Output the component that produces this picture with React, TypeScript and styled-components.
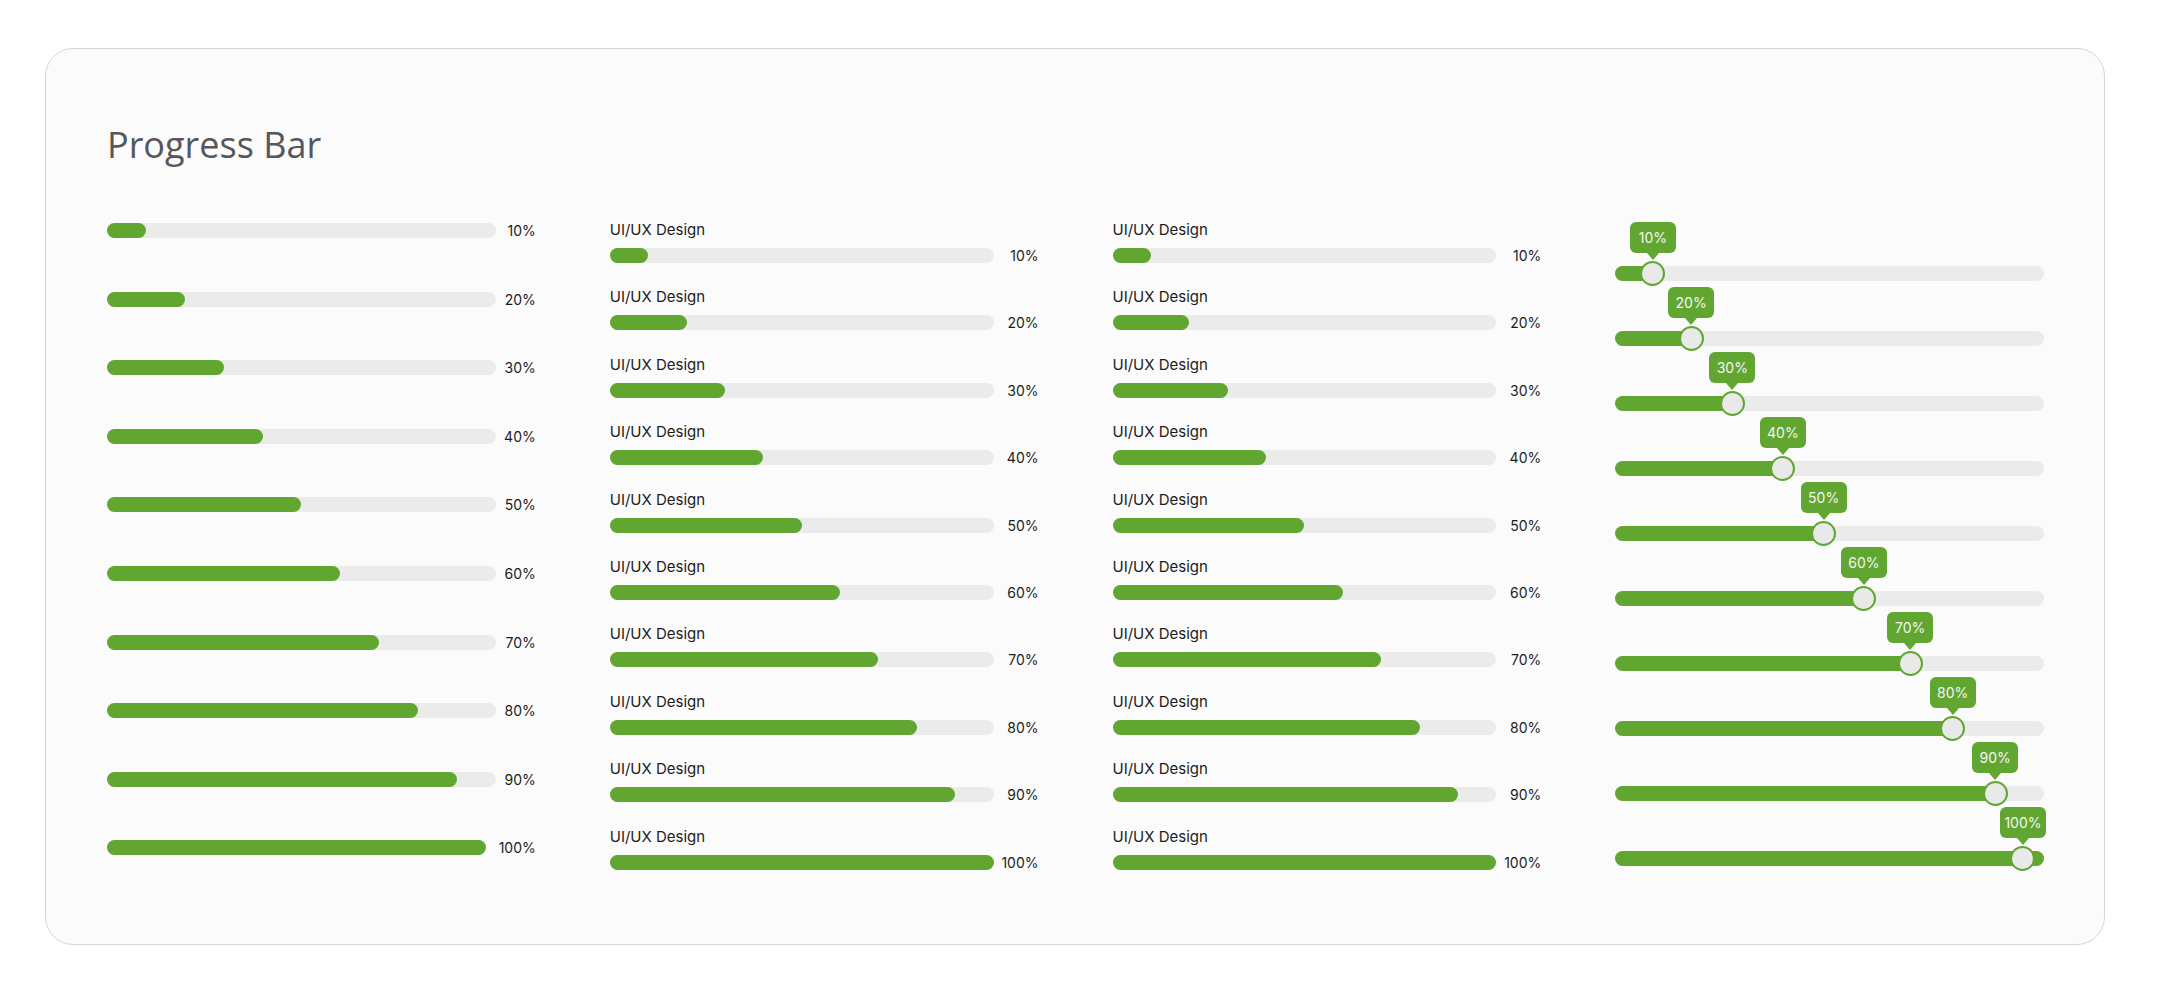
import styled, { createGlobalStyle } from "styled-components"

const GREEN = "#62a632"
const TRACK = "#ebebeb"

const steps = [10, 20, 30, 40, 50, 60, 70, 80, 90, 100]
// where the handle sits along the slider track (hand-placed in the design)
const handleAt = [8.8, 17.7, 27.3, 39.1, 48.6, 58.0, 68.8, 78.7, 88.6, 95.1]

const GlobalStyle = createGlobalStyle`
  body {
    margin: 0;
    background: #ffffff;
    font-family: Inter, "Noto Sans", sans-serif;
  }
`

const App = () => {
  return (
    <>
      <GlobalStyle />
      <Card>
        <Title>Progress Bar</Title>
        <Columns>
          <Column $gap={53.6} $offset={3}>
            {steps.map((pct) => (
              <BarRow key={pct}>
                <Track>
                  <Fill style={{ width: `${pct}%` }} />
                </Track>
                <Value $width={pct === 100 ? 50 : 40}>{pct}%</Value>
              </BarRow>
            ))}
          </Column>

          {[0, 1].map((col) => (
            <Column key={col} $gap={24.4} $offset={0}>
              {steps.map((pct) => (
                <Item key={pct}>
                  <ItemLabel>UI/UX Design</ItemLabel>
                  <BarRow>
                    <Track>
                      <Fill style={{ width: `${pct}%` }} />
                    </Track>
                    <Value $width={45}>{pct}%</Value>
                  </BarRow>
                </Item>
              ))}
            </Column>
          ))}

          <Column $gap={6} $offset={2}>
            {steps.map((pct, i) => (
              <SliderRow key={pct}>
                <Track>
                  <Fill style={{ width: `${pct}%` }} />
                  <Handle style={{ left: `${handleAt[i]}%` }}>
                    <Tooltip>{pct}%</Tooltip>
                    <Thumb />
                  </Handle>
                </Track>
              </SliderRow>
            ))}
          </Column>
        </Columns>
      </Card>
    </>
  )
}

const Card = styled.section`
  box-sizing: border-box;
  height: 897px;
  margin: 48px 55px 0 45px;
  padding: 78px 60px 0 61px;
  background: #fbfbfb;
  border: 1px solid #d6d6d6;
  border-radius: 28px;
`
const Title = styled.h1`
  margin: 0 0 57px;
  font-family: "Open Sans", sans-serif;
  font-size: 36px;
  line-height: 36px;
  font-weight: 400;
  color: #56575c;
`
const Columns = styled.div`
  display: grid;
  grid-template-columns: repeat(4, 1fr);
  column-gap: 74px;
  align-items: start;
`
const Column = styled.div<{ $gap: number; $offset: number }>`
  display: flex;
  flex-direction: column;
  gap: ${(p) => p.$gap}px;
  padding-top: ${(p) => p.$offset}px;
`
const BarRow = styled.div`
  display: flex;
  align-items: center;
  height: 15px;
`
const Track = styled.div`
  position: relative;
  flex: 1;
  height: 15px;
  background: ${TRACK};
  border-radius: 8px;
`
const Fill = styled.div`
  height: 100%;
  background: ${GREEN};
  border-radius: 8px;
`
const Value = styled.span<{ $width: number }>`
  width: ${(p) => p.$width}px;
  flex-shrink: 0;
  text-align: right;
  font-size: 14px;
  color: #1c1c1c;
`
const Item = styled.div`
  display: flex;
  flex-direction: column;
  gap: 8px;
`
const ItemLabel = styled.span`
  font-size: 15px;
  line-height: 20px;
  color: #1c1c1c;
`
const SliderRow = styled.div`
  padding-top: 44px;
`
const Handle = styled.div`
  position: absolute;
  top: 50%;
  width: 0;
  height: 0;
`
const Thumb = styled.span`
  position: absolute;
  left: -12.5px;
  top: -12.5px;
  box-sizing: border-box;
  width: 25px;
  height: 25px;
  border-radius: 50%;
  background: #e9e9e9;
  border: 2.5px solid ${GREEN};
`
const Tooltip = styled.span`
  position: absolute;
  bottom: 20.5px;
  left: -23px;
  width: 46px;
  height: 31px;
  display: flex;
  align-items: center;
  justify-content: center;
  background: ${GREEN};
  border-radius: 6px;
  color: #f4f4f4;
  font-size: 14px;

  &::after {
    content: "";
    position: absolute;
    top: 100%;
    left: 50%;
    margin-left: -6px;
    border-left: 6px solid transparent;
    border-right: 6px solid transparent;
    border-top: 7px solid ${GREEN};
  }
`

export default App
